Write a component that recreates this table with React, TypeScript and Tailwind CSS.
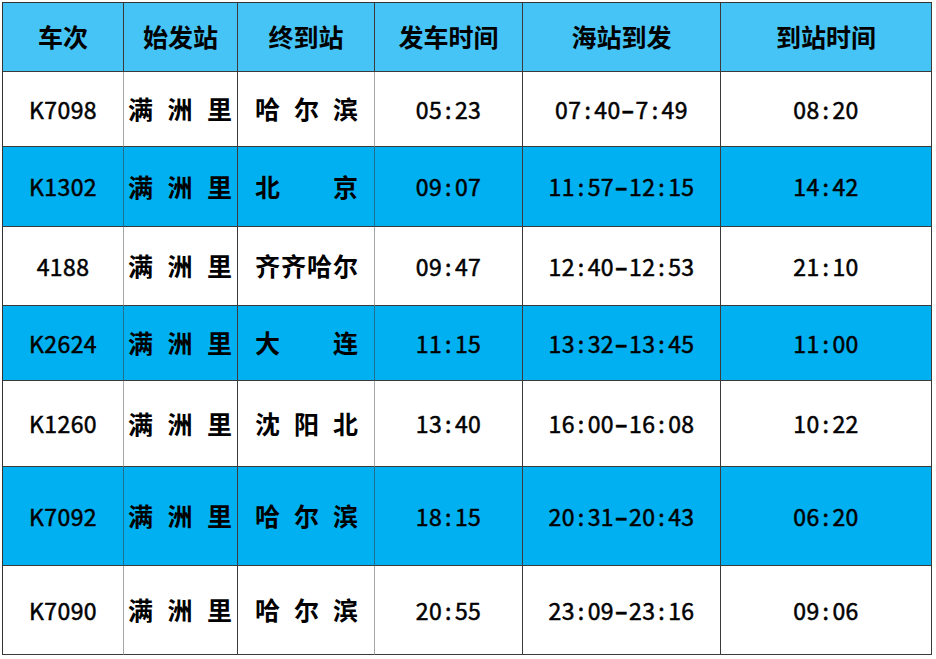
const cols = ["w-[121px]", "w-[114px]", "w-[137px]", "w-[148px]", "w-[198px]", "w-[211px]"];

const headers = ["车次", "始发站", "终到站", "发车时间", "海站到发", "到站时间"];

const rows = [
  { h: "h-[75px]", blue: false, train: "K7098", from: "满洲里", to: "哈尔滨", dep: "05:23", mid: "07:40–7:49", arr: "08:20" },
  { h: "h-[80px]", blue: true, train: "K1302", from: "满洲里", to: "北京", dep: "09:07", mid: "11:57–12:15", arr: "14:42" },
  { h: "h-[79px]", blue: false, train: "4188", from: "满洲里", to: "齐齐哈尔", dep: "09:47", mid: "12:40–12:53", arr: "21:10" },
  { h: "h-[75px]", blue: true, train: "K2624", from: "满洲里", to: "大连", dep: "11:15", mid: "13:32–13:45", arr: "11:00" },
  { h: "h-[86px]", blue: false, train: "K1260", from: "满洲里", to: "沈阳北", dep: "13:40", mid: "16:00–16:08", arr: "10:22" },
  { h: "h-[99px]", blue: true, train: "K7092", from: "满洲里", to: "哈尔滨", dep: "18:15", mid: "20:31–20:43", arr: "06:20" },
  { h: "h-[89px]", blue: false, train: "K7090", from: "满洲里", to: "哈尔滨", dep: "20:55", mid: "23:09–23:16", arr: "09:06" },
];

// spreads characters evenly across the cell, like Excel's distributed alignment
function Spread({ text }: { text: string }) {
  return (
    <div className="flex w-full justify-between">
      {text.split("").map((c, i) => (
        <span key={i}>{c}</span>
      ))}
    </div>
  );
}

// numbers: slightly smaller, medium weight, colons get air on both sides
function Num({ text }: { text: string }) {
  return (
    <span className="text-[23px] font-normal tracking-[0.4px] [-webkit-text-stroke:0.5px_black]">
      {text.split("").map((c, i) =>
        c === ":" ? (
          <span key={i} className="px-[3px]">:</span>
        ) : c === "–" ? (
          <span key={i} className="inline-block w-[15px] text-center font-bold">–</span>
        ) : (
          <span key={i}>{c}</span>
        )
      )}
    </span>
  );
}

export default function App() {
  return (
    <div className="min-h-screen bg-white pl-[2px] pt-[2px]">
      <div
        className="w-[930px] border-l border-t border-[#333] text-[25px] font-bold text-black"
        style={{ fontFamily: '"Noto Sans CJK SC", "Noto Sans", sans-serif' }}
      >
        {/* Header */}
        <div className="flex h-[69px] bg-[#45c4f5]">
          {headers.map((t, i) => (
            <div
              key={t}
              className={`${cols[i]} flex items-center justify-center border-b border-r border-[#3a3a3a]`}
            >
              {t}
            </div>
          ))}
        </div>

        {rows.map((r) => (
          <div key={r.train} className={`flex ${r.h} ${r.blue ? "bg-[#00b0f0]" : "bg-white"}`}>
            <div
              className={`${cols[0]} flex items-center justify-center border-b border-r border-b-[#3a3a3a] ${
                r.blue ? "border-r-[#1f6f8f]" : "border-r-[#a6a6a6]"
              }`}
            >
              <Num text={r.train} />
            </div>
            <div className={`${cols[1]} flex items-center border-b border-r border-[#3a3a3a] pl-[4px] pr-[5px]`}>
              <Spread text={r.from} />
            </div>
            <div
              className={`${cols[2]} flex items-center border-b border-r border-b-[#3a3a3a] pl-[17px] pr-[16px] ${
                r.blue ? "border-r-[#1f6f8f]" : "border-r-[#a6a6a6]"
              }`}
            >
              <Spread text={r.to} />
            </div>
            <div className={`${cols[3]} flex items-center justify-center border-b border-r border-[#3a3a3a]`}>
              <Num text={r.dep} />
            </div>
            <div className={`${cols[4]} flex items-center justify-center border-b border-r border-[#3a3a3a]`}>
              <Num text={r.mid} />
            </div>
            <div className={`${cols[5]} flex items-center justify-center border-b border-r border-[#3a3a3a]`}>
              <Num text={r.arr} />
            </div>
          </div>
        ))}
      </div>
    </div>
  );
}
